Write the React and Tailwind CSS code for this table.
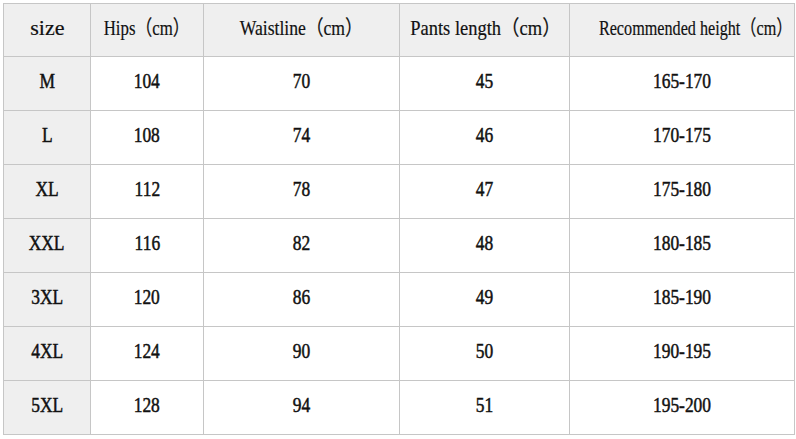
import React from "react";

const headers = [
  { label: "size", scale: "scale-x-[1.05]" },
  { label: "Hips（cm）", scale: "scale-x-[0.8]" },
  { label: "Waistline（cm）", scale: "scale-x-[0.84]" },
  { label: "Pants length（cm）", scale: "scale-x-[0.88]" },
  { label: "Recommended height（cm）", scale: "scale-x-[0.77]" },
];

const rows = [
  ["M", "104", "70", "45", "165-170"],
  ["L", "108", "74", "46", "170-175"],
  ["XL", "112", "78", "47", "175-180"],
  ["XXL", "116", "82", "48", "180-185"],
  ["3XL", "120", "86", "49", "185-190"],
  ["4XL", "124", "90", "50", "190-195"],
  ["5XL", "128", "94", "51", "195-200"],
];

const SizeChart = () => {
  return (
    <div className="w-[796px] h-[439px] bg-white p-[3px] font-['Liberation_Serif','Noto_Sans_CJK_SC',serif] text-[21px] text-[#111]">
      <table className="w-[791px] table-fixed border-collapse">
        <colgroup>
          <col className="w-[87px]" />
          <col className="w-[113px]" />
          <col className="w-[196px]" />
          <col className="w-[170px]" />
          <col className="w-[225px]" />
        </colgroup>
        <thead>
          <tr className="h-[53px] bg-[#efefef]">
            {headers.map((h, i) => (
              <th
                key={i}
                className="border border-[#c6c6c6] font-normal text-center align-middle p-0 pb-[2px] [-webkit-text-stroke:0.2px_#111]"
              >
                <span className={`inline-block whitespace-nowrap ${h.scale}`}>
                  {h.label}
                </span>
              </th>
            ))}
          </tr>
        </thead>
        <tbody>
          {rows.map((row, r) => (
            <tr key={r} className="h-[54px]">
              {row.map((cell, c) => (
                <td
                  key={c}
                  className={`border border-[#c6c6c6] text-center align-middle p-0 pb-[4px] [-webkit-text-stroke:0.5px_#111] ${
                    c === 0 ? "bg-[#efefef]" : "bg-white"
                  }`}
                >
                  <span className="inline-block whitespace-nowrap scale-x-[0.83]">
                    {cell}
                  </span>
                </td>
              ))}
            </tr>
          ))}
        </tbody>
      </table>
    </div>
  );
};

export default function App() {
  return <SizeChart />;
}
